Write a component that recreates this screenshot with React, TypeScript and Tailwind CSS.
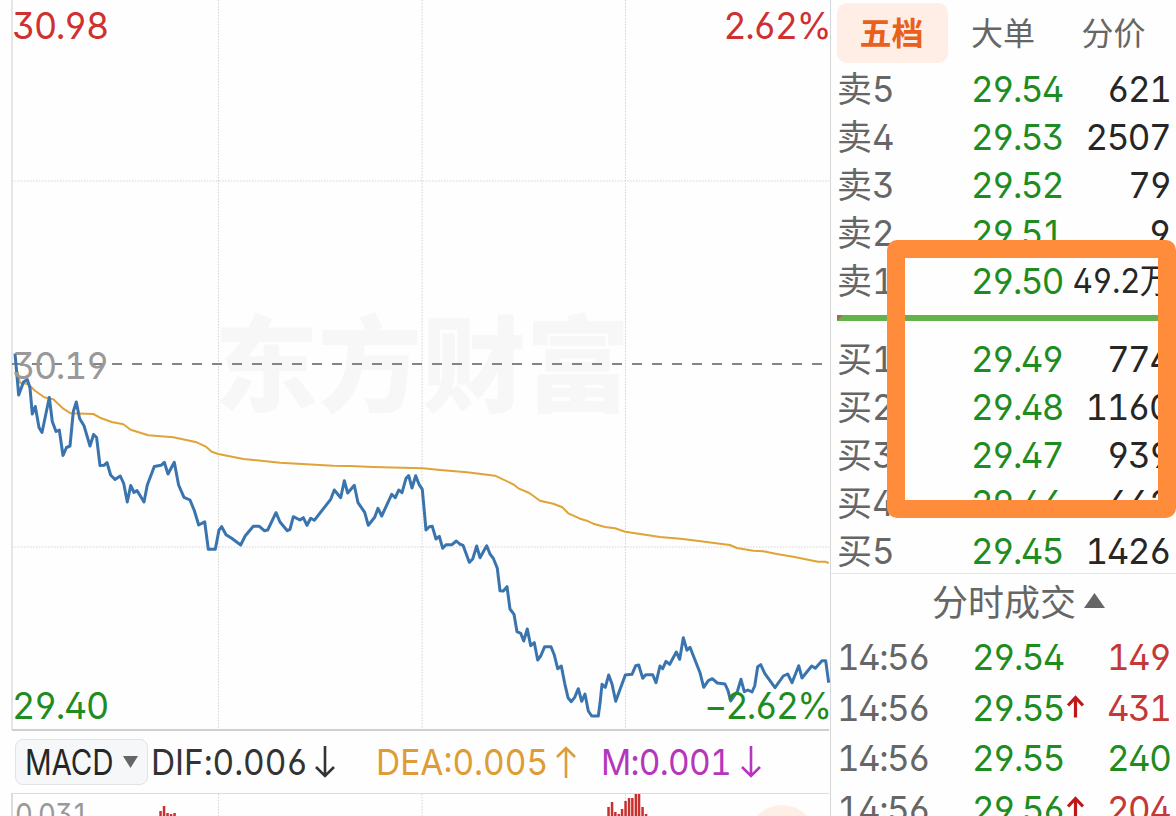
import clsx from "clsx";

const PRICE_LINE =
  "15,353.5 18.7,395 23.5,382 27.3,379.5 30,388 32.3,414 35.3,406.5 39,427.5 42,432.5 49.3,397.5 52.3,421.5 56,431.5 59.3,430 63,455.5 66.5,447.5 70,446 73.3,411.5 76.3,402 79.6,418.5 84,425.7 90,446 93.6,434.5 96.6,437.5 100,465.5 104,465.3 107,462.5 110.6,475 115,479.5 120.3,476 123.7,483.5 127.3,502 130.7,485.5 134,492.5 137,490.5 144,502 147.3,485 154.3,466.5 161,465.3 164.3,462.3 168,474 174.3,462.3 178.6,485 184,497.3 190,500 194.3,510.5 198.7,525 204.7,521.7 208.3,549.3 215.3,549.3 219,530 221.7,526.7 226,534.7 231.7,538.3 240.7,545 245.3,535.7 253.3,526.3 259.3,526.3 264.3,530.7 267.7,530 276,512.7 280,522 287.3,530.7 290,529.3 293.3,516.7 300,520 303.3,517.7 307,525.3 310.7,518.3 314.3,520.3 330.7,499.3 334.3,490 340.7,497.7 344.3,480.7 347.7,493 354.3,485.3 358,502.7 364.7,512.3 368.3,525.3 374.7,517.3 378,508.3 381.7,516 391.7,494.3 395.3,497.7 398.7,490 402,492.7 406,478.3 408.7,475.7 412,488 415.7,475.7 419,484.3 422.3,489.3 426,530 429.3,526.7 432.3,526.3 436,539 439.3,536.3 442.7,548.3 446,544.7 452,544.7 456.3,541 459.7,544 463,545.3 469.3,562.3 472.7,559 476.7,546 480,557.7 486.7,545.7 490,554 493.3,558.3 497.3,568.3 500,590.7 503.3,591 507,586.7 510,609 514,614.3 517,631.7 520.7,633.3 523.7,641 527.3,629 530.7,645.7 534.3,642.7 537.7,660 540.7,656 544.7,646.7 551,646.7 554.3,655 557.7,668.7 561.3,666 564.7,683.3 568,697.7 571.3,701.7 574.7,697.3 578.3,688.7 581.7,701.3 585,694 588.3,711 591.7,716 598.3,716 600,703.3 602,684.3 605.3,687.3 608.7,675 612,684 615.7,701.3 625.3,675 632,674.3 635.7,665.7 638.7,665 642.7,678.3 645.7,674.7 652.7,674.7 656,682.7 660,666 662.7,668.7 666,661.3 669.7,664.3 676.3,652 679.7,659.3 683.3,637.7 687,650.3 690,647.3 700,672.7 703.7,687.3 708.3,680.7 712.3,678.7 717.3,683 725,684 728,690.7 730.7,701 737.3,691.7 741,679.3 744.3,691.7 748,690 752,692 754.7,686 757.7,666.7 760.7,664.7 764.7,673.3 775,687.7 783.3,676 787.7,674 792,682.7 798.7,665.7 802,678 811.7,666 815.3,668.3 822,660.7 825.7,660.7 828.7,682.7";

const AVERAGE_LINE =
  "15,362 20,382.7 28,384 35,390.7 44.3,397.3 53.3,399.3 63.3,408.7 70.7,413.3 93.3,414 100,417.7 111.7,422 123.3,424.3 130.7,429.7 148.3,435.3 173.3,437.3 196.7,442.3 206,446.7 211.7,451.7 218.3,454 243.3,459 280,462.7 333,465.7 350,466 373,467 423,468.3 440,470 467,472.3 495,475.7 513.3,484.3 518.3,488.3 529.3,493 540,500.7 553.3,503.7 562.3,507.3 568.3,513.3 580,518.7 586.7,520.7 593.3,523.7 605,527 615,528.3 625.3,531.7 660,537 683,539 730,545 736.7,548 753.3,550.7 763.3,551.3 776.7,554 793.3,556.7 818,561.7 825,561.7 828.7,563";

// x and top of each visible MACD bar
const MACD_BARS = [
  [160.5, 811], [164, 806], [167.5, 813], [171, 814], [174.5, 813],
  [608.5, 807], [612, 802], [615.3, 812], [618.8, 814], [622, 809], [625.5, 801],
  [629, 798], [632.3, 798], [635.8, 794], [639, 794], [642.5, 807], [646, 814],
];

const sells = [
  { label: "卖5", price: "29.54", volume: "621" },
  { label: "卖4", price: "29.53", volume: "2507" },
  { label: "卖3", price: "29.52", volume: "79" },
  { label: "卖2", price: "29.51", volume: "9" },
  { label: "卖1", price: "29.50", volume: "49.2万" },
];

const buys = [
  { label: "买1", price: "29.49", volume: "774" },
  { label: "买2", price: "29.48", volume: "1160" },
  { label: "买3", price: "29.47", volume: "939" },
  { label: "买4", price: "29.46", volume: "662" },
  { label: "买5", price: "29.45", volume: "1426" },
];

const trades = [
  { time: "14:56", price: "29.54", volume: "149", up: false, red: true },
  { time: "14:56", price: "29.55", volume: "431", up: true, red: true },
  { time: "14:56", price: "29.55", volume: "240", up: false, red: false },
  { time: "14:56", price: "29.56", volume: "204", up: true, red: true },
];

const Num = ({ children, className }: { children: string; className?: string }) => (
  <span className={clsx("inline-block whitespace-nowrap", className ?? "origin-left scale-x-[0.97] tracking-[-1.4px]")}>
    {children}
  </span>
);

const Quote = ({ label, price, volume }: { label: string; price: string; volume: string }) => {
  const wide = volume.endsWith("万");
  return (
    <div className="grid h-12 grid-cols-[134px_94px_1fr] items-center pl-[6px] pr-[6px]">
      <span className="flex items-center text-[#666]">
        <span className="pt-px text-[35px]">{label[0]}</span>
        <Num>{label[1]}</Num>
      </span>
      <Num className="origin-left scale-x-[0.97] tracking-[-1.7px] text-[#1f8c1f]">{price}</Num>
      <div className="flex justify-end text-[#262626]">
        <Num className={wide ? "mr-[2px] origin-right scale-x-[0.93] text-[34px] tracking-[-0.7px]" : "origin-right scale-x-[0.97] tracking-[-1.6px]"}>
          {volume}
        </Num>
      </div>
    </div>
  );
};

const Chart = () => (
  <div className="relative h-[731px]">
    <div className="absolute left-[214px] top-[300px] whitespace-nowrap text-[104px] font-black leading-[132px] text-[#f7f7f7]">东方财富</div>
    <svg className="absolute inset-0" width="830" height="731" fill="none">
      <path d="M218.5 0V730M422 0V730M625.5 0V730M12 181H829M12 547H829" stroke="#d4d4d4" strokeDasharray="1.5 1.5" />
      <path d="M12 0V730" stroke="#dcdcdc" strokeWidth="1.5" />
      <path d="M12 730H829" stroke="#cfcfcf" strokeWidth="2" />
      <path d="M12 364H829" stroke="#858585" strokeWidth="1.8" strokeDasharray="10 10" />
      <polyline points={AVERAGE_LINE} stroke="#e0a336" strokeWidth="2" strokeLinejoin="round" />
      <polyline points={PRICE_LINE} stroke="#3a74ae" strokeWidth="3" strokeLinejoin="round" />
    </svg>
    <div className="absolute left-3 top-px text-[37px] leading-[50px] text-[#cf3030]"><Num>30.98</Num></div>
    <div className="absolute right-0 top-px text-[37px] leading-[50px] text-[#cf3030]">
      <Num className="origin-right scale-x-[0.96] tracking-[-1.4px]">2.62%</Num>
    </div>
    <div className="absolute left-3 top-[341px] text-[37px] leading-[50px] text-[#999]"><Num>30.19</Num></div>
    <div className="absolute left-3 top-[681px] text-[37px] leading-[50px] text-[#1f8c1f]"><Num>29.40</Num></div>
    <div className="absolute right-0 top-[681px] text-[37px] leading-[50px] text-[#1f8c1f]">
      <Num className="origin-right scale-x-[0.96] tracking-[-1.8px]">−2.62%</Num>
    </div>
  </div>
);

const Arrow = ({ down }: { down?: boolean }) => (
  <svg className={clsx("ml-[5px]", !down && "rotate-180")} width="20" height="34" fill="none" stroke="currentColor" strokeWidth="2.6">
    <path d="M10 1V31M1 22L10 31L19 22" />
  </svg>
);

const Indicators = () => (
  <div className="flex h-[62px] items-center">
    <div className="ml-[15px] flex h-[46px] w-[133px] items-center rounded-lg border border-[#e2e3e5] bg-[#f6f7f9] pl-[9px] text-[#262626]">
      <span className="w-[88px]"><Num className="origin-left scale-x-[0.82] tracking-[-0.1px]">MACD</Num></span>
      <svg className="ml-[10px]" width="15" height="12"><path d="M0 0H15L7.5 12Z" fill="#666" /></svg>
    </div>
    <div className="ml-[3px] flex w-[226px] items-center text-[#333]">
      <span className="w-[159px]"><Num className="origin-left scale-x-[0.93] tracking-[-0.1px]">DIF:0.006</Num></span>
      <Arrow down />
    </div>
    <div className="flex w-[225px] items-center text-[#dd9c35]">
      <span className="w-[174px]"><Num className="-ml-px origin-left scale-x-[0.93]">DEA:0.005</Num></span>
      <Arrow />
    </div>
    <div className="flex items-center text-[#b535bd]">
      <span className="w-[134px]"><Num className="-ml-px origin-left scale-x-[0.93] tracking-[-0.8px]">M:0.001</Num></span>
      <Arrow down />
    </div>
  </div>
);

const MacdPanel = () => (
  <div className="relative ml-[11px] mr-px h-[23px] overflow-hidden border-l-2 border-t border-[#dcdcdc]">
    <svg className="absolute -left-[13px] -top-px" width="830" height="23" viewBox="0 793 830 23">
      <path d="M218.5 794V816M422 794V816M625.5 794V816" stroke="#d4d4d4" strokeDasharray="1.5 1.5" />
      <circle cx="782" cy="839" r="34" fill="#feeee6" />
      {MACD_BARS.map(([x, y]) => (
        <rect key={x} x={x - 1.2} y={y} width="2.5" height={816 - y} fill="#c8302e" />
      ))}
    </svg>
    <div className="absolute left-[2px] top-px text-[30px] leading-[38px] text-[#999]">
      <Num className="origin-left scale-x-[0.92] tracking-[-1.2px]">0.031</Num>
    </div>
  </div>
);

const App = () => {
  return (
    <div className="relative flex h-[816px] w-[1176px] overflow-hidden bg-[#fefefe] font-['Inter','Noto_Sans_CJK_SC',sans-serif] text-[36px] leading-none [font-feature-settings:'ss01','tnum']">
      <main className="w-[830px] shrink-0">
        <Chart />
        <Indicators />
        <MacdPanel />
      </main>

      <aside className="w-[346px] shrink-0 border-l border-[#d3d5da]">
        <div className="flex h-[65px] items-start pl-[6px] pt-[3px] text-[32px] leading-[62px] text-[#666]">
          <div className="h-[60px] w-[111px] rounded-[10px] bg-[#feeee6] pr-[2px] text-center font-bold text-[#e8601c]">五档</div>
          <div className="w-[110px] text-center">大单</div>
          <div className="w-[111px] text-center">分价</div>
        </div>
        {sells.map((row) => <Quote key={row.label} {...row} />)}
        <div className="ml-[6px] mt-[10px] mb-[14px] h-[6px] bg-[#62b34c]">
          <svg width="6" height="6"><path d="M0 0H6L0 6Z" fill="#ad6550" /></svg>
        </div>
        {buys.map((row) => <Quote key={row.label} {...row} />)}
        <div className="-mt-[2px] flex h-[59px] items-center justify-center gap-[8px] border-t border-[#e6e7ea] pl-[30px] text-[36px] text-[#666]">
          分时成交
          <svg className="-mt-[6px]" width="21" height="15"><path d="M10.5 0L21 15H0Z" fill="#666" /></svg>
        </div>
        {trades.map(({ time, price, volume, up, red }, i) => (
          <div key={i} className="grid h-[50.5px] grid-cols-[135px_94px_1fr] items-center pl-[6px] pr-[6px]">
            <Num className="origin-left scale-x-[0.97] tracking-[-1.6px] text-[#666]">{time}</Num>
            <Num className="origin-left scale-x-[0.97] tracking-[-1.7px] text-[#1f8c1f]">{price}</Num>
            <div className="flex items-center justify-between">
              {up ? (
                <svg className="-mt-[3px] ml-px" width="17" height="23" fill="none" stroke="#c01818" strokeWidth="3.2">
                  <path d="M8.5 22.5V3M1 10.5L8.5 2.5L16 10.5" />
                </svg>
              ) : <span />}
              <Num className={clsx("origin-right scale-x-[0.97] tracking-[-1.6px]", red ? "text-[#c43838]" : "text-[#1f8c1f]")}>{volume}</Num>
            </div>
          </div>
        ))}
      </aside>

      <div className="absolute left-[887px] top-[240px] h-[278px] w-[289px] rounded-[10px] border-[18px] border-[#ff8c3a]" />
    </div>
  );
};

export default App;
